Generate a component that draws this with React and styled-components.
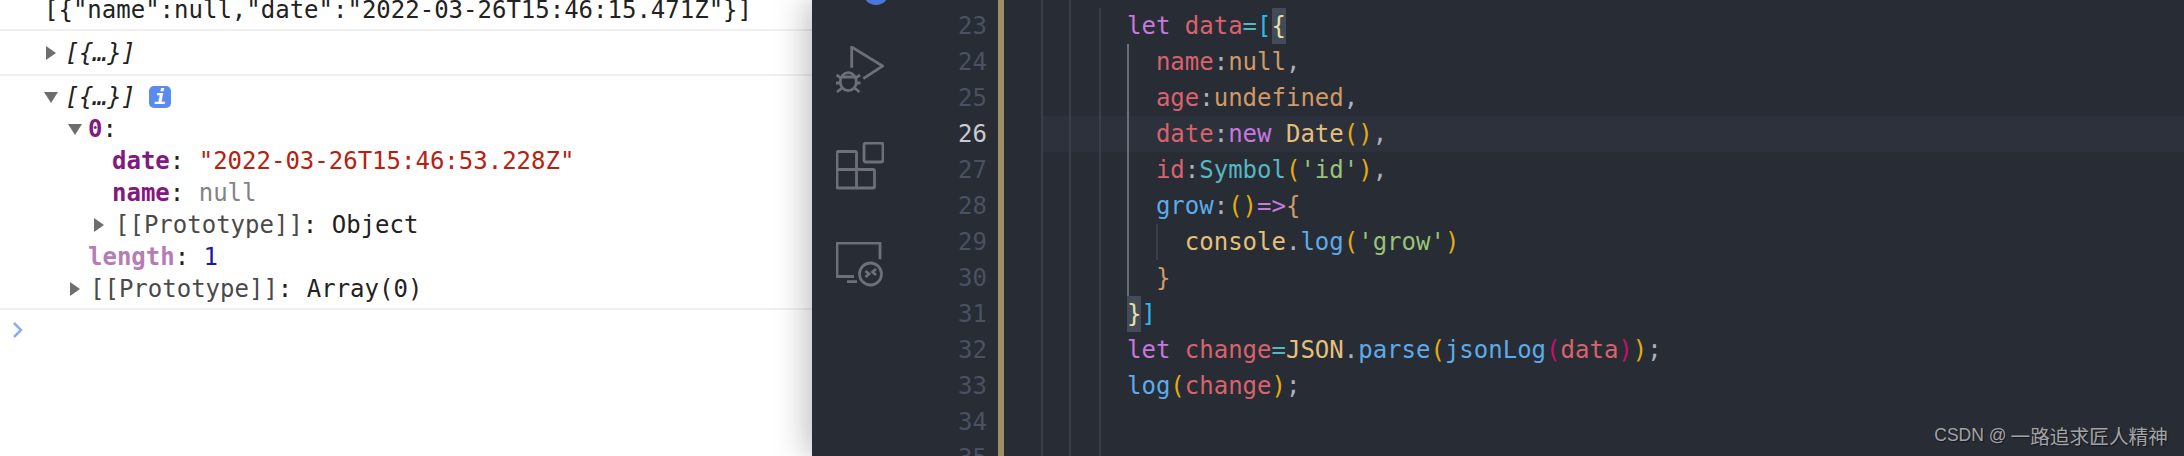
import React from "react";
import styled, { createGlobalStyle } from "styled-components";

const GlobalStyle = createGlobalStyle`
  html, body {
    margin: 0;
    padding: 0;
    background: #ffffff;
  }
`;

const Page = styled.div`
  position: relative;
  display: flex;
  width: 2184px;
  height: 456px;
  overflow: hidden;
  font-family: "DejaVu Sans Mono", "Liberation Mono", monospace;
  font-size: 24px;
`;

// DevTools console
const ConsolePane = styled.div`
  width: 812px;
  flex: none;
  margin-top: -6px;
  color: #222222;
`;

const Entry = styled.div`
  padding: ${(p) => p.$top}px 0 ${(p) => p.$bottom}px;
  border-bottom: 2px solid #f0f0f0;
`;

const Row = styled.div`
  display: flex;
  align-items: center;
  height: 32px;
  padding-left: ${(p) => p.$x}px;
  white-space: pre;
`;

const Twisty = styled.span`
  flex: none;
  width: 0;
  height: 0;
  margin-right: ${(p) => p.$gap}px;
  ${(p) =>
    p.$open
      ? `border-left: 7px solid transparent;
         border-right: 7px solid transparent;
         border-top: 11px solid #6e6e6e;`
      : `border-top: 7px solid transparent;
         border-bottom: 7px solid transparent;
         border-left: 10px solid #6e6e6e;`}
`;

const Preview = styled.span`
  font-style: italic;
  letter-spacing: -0.4px;
`;

const InfoBadge = styled.span`
  display: flex;
  align-items: center;
  justify-content: center;
  width: 22px;
  height: 22px;
  margin-left: 14px;
  border-radius: 5px;
  background: #5a8cf0;
  color: #ffffff;
  font-size: 20px;
  font-style: italic;
  font-weight: bold;
`;

const Key = styled.span`
  color: ${(p) => (p.$dim ? "#b57db5" : "#84187f")};
  font-weight: bold;
`;

const Str = styled.span`
  color: #b8200f;
`;

const Nul = styled.span`
  color: #808487;
`;

const Num = styled.span`
  color: #1a1aa6;
`;

const Internal = styled.span`
  color: #4a4a4a;
`;

const PromptRow = styled.div`
  display: flex;
  align-items: center;
  height: 32px;
  padding: 4px 0 0 12px;
`;

// VS Code editor
const Editor = styled.div`
  position: relative;
  flex: 1;
  display: flex;
  background: #282c34;
  box-shadow: -6px 0 30px rgba(0, 0, 0, 0.25);
`;

const ActivityBar = styled.div`
  position: relative;
  width: 96px;
  flex: none;
  display: flex;
  flex-direction: column;
  align-items: flex-start;
  padding: 46px 0 0 24px;
  box-sizing: border-box;
`;

const Badge = styled.span`
  position: absolute;
  left: 51px;
  top: -21px;
  width: 26px;
  height: 26px;
  border-radius: 50%;
  background: #4a78d8;
`;

const BarIcon = styled.svg`
  display: block;
  margin-bottom: ${(p) => p.$after}px;
  fill: none;
  stroke: #6d7076;
  stroke-width: 2.8;
`;

const Gutter = styled.div`
  width: 90px;
  flex: none;
  margin-top: 8px;
  padding-right: 11px;
  box-sizing: border-box;
  text-align: right;
  color: #495162;
`;

const LineNo = styled.div`
  height: 36px;
  line-height: 36px;
  color: ${(p) => (p.$active ? "#c8cbd1" : "inherit")};
`;

const ChangeBar = styled.div`
  width: 6px;
  flex: none;
  background: #9b8f63;
`;

const Code = styled.div`
  position: relative;
  flex: 1;
  margin-top: 8px;
  padding-left: 37px;
`;

const Guide = styled.span`
  position: absolute;
  left: ${(p) => p.$x}px;
  top: ${(p) => p.$top}px;
  height: ${(p) => p.$height}px;
  width: 2px;
  background: ${(p) => p.$color};
`;

const CodeLine = styled.div`
  height: 36px;
  line-height: 36px;
  padding-left: 86px;
  white-space: pre;
  color: #abb2bf;
  background: ${(p) => (p.$active ? "#2c313c" : "transparent")};
`;

const T = styled.span`
  color: ${(p) => p.$c};
`;

const Match = styled.span`
  display: inline-block;
  height: 36px;
  background: #434a58;
  color: #e6e2a8;
`;

const Watermark = styled.div`
  position: absolute;
  right: 16px;
  bottom: 6px;
  display: flex;
  align-items: center;
  gap: 4px;
  font-family: "Liberation Sans", "Noto Sans CJK SC", sans-serif;
  font-size: 17.5px;
  color: #a2a4a7;
  text-shadow: 1px 1px 1px rgba(0, 0, 0, 0.5);
`;

const WatermarkName = styled.span`
  font-family: "Noto Sans CJK SC", sans-serif;
  font-size: 19.7px;
`;

const red = "#d9626e";
const orange = "#cf9a66";
const purple = "#c678dd";
const cyan = "#56b6c2";
const blue = "#5dabea";
const yellow = "#e5c07b";
const green = "#98c379";
const gold = "#e3ad12";
const sky = "#2db8ec";
const pink = "#c2106c";

const numbers = [23, 24, 25, 26, 27, 28, 29, 30, 31, 32, 33, 34, 35];

const DebugIcon = () => (
  <BarIcon width="48" height="48" viewBox="0 0 48 48" $after={48}>
    <path d="M15.7 21.7V1L46.7 20 27.3 32.7" />
    <ellipse cx="12.3" cy="35.7" rx="8" ry="9" />
    <path d="M5 31h15M0.5 29l5 3.5M24 29l-5 3.5M0 37h4.5M24.5 37h-4.5M1 46l5-4M23.5 46l-5-4" />
  </BarIcon>
);

const ExtensionsIcon = () => (
  <BarIcon width="48" height="48" viewBox="0 0 48 48" $after={52}>
    <rect x="28" y="1" width="19" height="19" rx="2" />
    <path d="M20.5 27.5V11a1.5 1.5 0 0 0-1.5-1.5H2.5A1.5 1.5 0 0 0 1 11v34a1 1 0 0 0 1 1h35a1.5 1.5 0 0 0 1.5-1.5v-15.5a1.5 1.5 0 0 0-1.5-1.5H1M20.5 27.5V46" />
  </BarIcon>
);

const RemoteIcon = () => (
  <BarIcon width="48" height="46" viewBox="0 0 48 46" $after={0}>
    <path d="M44 17.3V1H1v33.500h17M11 39.700h10" />
    <circle cx="34.500" cy="32" r="11" />
    <path d="M29.500 29l3.500 3-3.500 3M40 27l-3.500 3 3.500 3" />
  </BarIcon>
);

const App = () => {
  return (
    <Page>
      <GlobalStyle />
      <ConsolePane>
        <Entry $top={0} $bottom={3}>
          <Row $x={44}>{'[{"name":null,"date":"2022-03-26T15:46:15.471Z"}]'}</Row>
        </Entry>
        <Entry $top={6} $bottom={5}>
          <Row $x={46}>
            <Twisty $gap={9} />
            <Preview>[{"{…}"}]</Preview>
          </Row>
        </Entry>
        <Entry $top={5} $bottom={3}>
          <Row $x={44}>
            <Twisty $open $gap={7} />
            <Preview>[{"{…}"}]</Preview>
            <InfoBadge>i</InfoBadge>
          </Row>
          <Row $x={68}>
            <Twisty $open $gap={6} />
            <Key>0</Key>:
          </Row>
          <Row $x={112}>
            <Key>date</Key>: <Str>"2022-03-26T15:46:53.228Z"</Str>
          </Row>
          <Row $x={112}>
            <Key>name</Key>: <Nul>null</Nul>
          </Row>
          <Row $x={94}>
            <Twisty $gap={11} />
            <Internal>[[Prototype]]</Internal>: Object
          </Row>
          <Row $x={88}>
            <Key $dim>length</Key>: <Num>1</Num>
          </Row>
          <Row $x={70}>
            <Twisty $gap={10} />
            <Internal>[[Prototype]]</Internal>: Array(0)
          </Row>
        </Entry>
        <PromptRow>
          <svg width="12" height="16" viewBox="0 0 12 16" fill="none" stroke="#8aaef0" strokeWidth="2.5">
            <path d="M2 1l7 7-7 7" />
          </svg>
        </PromptRow>
      </ConsolePane>

      <Editor>
        <ActivityBar>
          <Badge />
          <DebugIcon />
          <ExtensionsIcon />
          <RemoteIcon />
        </ActivityBar>
        <Gutter>
          {numbers.map((n) => (
            <LineNo key={n} $active={n === 26}>
              {n}
            </LineNo>
          ))}
        </Gutter>
        <ChangeBar />
        <Code>
          <Guide $x={37} $top={-8} $height={480} $color="#3a3f4b" />
          <Guide $x={65} $top={-8} $height={480} $color="#3a3f4b" />
          <Guide $x={95} $top={0} $height={472} $color="#3a3f4b" />
          <Guide $x={123} $top={36} $height={252} $color="#6b6f78" />
          <Guide $x={152} $top={216} $height={36} $color="#3a3f4b" />
          <CodeLine>
            <T $c={purple}>let</T> <T $c={red}>data</T>
            <T $c={cyan}>=</T>
            <T $c={sky}>[</T>
            <Match>{"{"}</Match>
          </CodeLine>
          <CodeLine>
            {"  "}
            <T $c={red}>name</T>:<T $c={orange}>null</T>,
          </CodeLine>
          <CodeLine>
            {"  "}
            <T $c={red}>age</T>:<T $c={orange}>undefined</T>,
          </CodeLine>
          <CodeLine $active>
            {"  "}
            <T $c={red}>date</T>:<T $c={purple}>new</T> <T $c={yellow}>Date</T>
            <T $c={gold}>()</T>,
          </CodeLine>
          <CodeLine>
            {"  "}
            <T $c={red}>id</T>:<T $c={cyan}>Symbol</T>
            <T $c={gold}>(</T>
            <T $c={green}>'id'</T>
            <T $c={gold}>)</T>,
          </CodeLine>
          <CodeLine>
            {"  "}
            <T $c={blue}>grow</T>:<T $c={gold}>()</T>
            <T $c={purple}>=&gt;</T>
            <T $c={orange}>{"{"}</T>
          </CodeLine>
          <CodeLine>
            {"    "}
            <T $c={yellow}>console</T>.<T $c={blue}>log</T>
            <T $c={gold}>(</T>
            <T $c={green}>'grow'</T>
            <T $c={gold}>)</T>
          </CodeLine>
          <CodeLine>
            {"  "}
            <T $c={orange}>{"}"}</T>
          </CodeLine>
          <CodeLine>
            <Match>{"}"}</Match>
            <T $c={sky}>]</T>
          </CodeLine>
          <CodeLine>
            <T $c={purple}>let</T> <T $c={red}>change</T>
            <T $c={cyan}>=</T>
            <T $c={yellow}>JSON</T>.<T $c={blue}>parse</T>
            <T $c={gold}>(</T>
            <T $c={blue}>jsonLog</T>
            <T $c={pink}>(</T>
            <T $c={red}>data</T>
            <T $c={pink}>)</T>
            <T $c={gold}>)</T>;
          </CodeLine>
          <CodeLine>
            <T $c={blue}>log</T>
            <T $c={gold}>(</T>
            <T $c={red}>change</T>
            <T $c={gold}>)</T>;
          </CodeLine>
        </Code>
        <Watermark>
          CSDN @<WatermarkName>一路追求匠人精神</WatermarkName>
        </Watermark>
      </Editor>
    </Page>
  );
};

export default App;
